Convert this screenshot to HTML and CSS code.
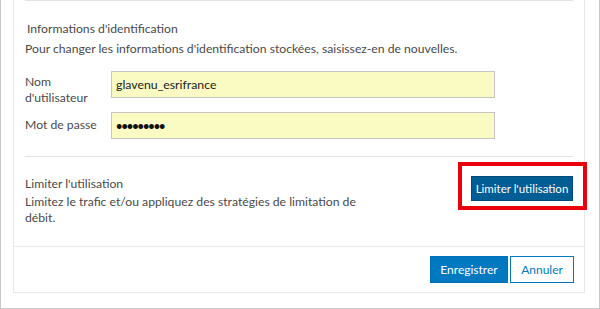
FILE: index.html
```html
<!DOCTYPE html>
<html lang="fr">
<head>
<meta charset="utf-8">
<title>Informations d'identification</title>
<link rel="stylesheet" href="styles.css">
</head>
<body>
<div class="frame">
  <div class="panel">
    <section class="sec creds">
      <h2 class="title">Informations d'identification</h2>
      <p class="desc">Pour changer les informations d'identification stockées, saisissez-en de nouvelles.</p>
      <div class="row row-user">
        <label class="lbl lbl-two" for="user">Nom<br>d'utilisateur</label>
        <input class="field" id="user" type="text" value="glavenu_esrifrance">
      </div>
      <div class="row row-pass">
        <label class="lbl lbl-one" for="pass">Mot de passe</label>
        <input class="field field-pass" id="pass" type="text" value="•••••••••">
      </div>
    </section>
    <section class="sec limit">
      <div class="limit-text">
        <h2 class="title2">Limiter l'utilisation</h2>
        <p class="desc2">Limitez le trafic et/ou appliquez des stratégies de limitation de débit.</p>
      </div>
      <div class="limit-action">
        <button class="btn btn-dark" type="button">Limiter l'utilisation</button>
        <span class="highlight"></span>
      </div>
    </section>
    <footer class="foot">
      <button class="btn btn-primary" type="button">Enregistrer</button>
      <button class="btn btn-outline" type="button">Annuler</button>
    </footer>
  </div>
</div>
</body>
</html>
```
FILE: styles.css
```css
* { box-sizing: border-box; }
html, body { margin: 0; padding: 0; background: #fff; }
body {
  font-family: "Lato", "Open Sans", sans-serif;
  font-size: 12.2px;
  color: #4a4a4a;
}
.frame {
  width: 600px;
  height: 309px;
  border: 1px solid #c9c9c9;
  border-top: none;
  overflow: hidden;
}
.panel {
  margin-left: 12px;
  width: 572px;
  height: 293px;
  border: 1px solid #e8e8e8;
  border-top: none;
  display: flex;
  flex-direction: column;
}
.sec {
  margin: 0 11px;
  border-top: 1px solid #e3e3e3;
}
.creds {
  padding: 18px 0 17px;
}
.title {
  margin: 0;
  padding-left: 2px;
  font-size: 12.2px;
  font-weight: normal;
  line-height: 20px;
}
.desc {
  margin: 0 0 12px;
  line-height: 20px;
}
.row {
  display: flex;
  align-items: flex-start;
}
.row-pass { margin-top: 6px; }
.lbl {
  width: 86px;
  flex: none;
  line-height: 16px;
}
.lbl-two { padding-top: 3px; }
.lbl-one { padding-top: 5px; }
.field {
  width: 384px;
  height: 27px;
  margin: 0;
  padding: 0 4px;
  border: 1px solid #c6c6c0;
  background: #fafbc2;
  font-family: inherit;
  font-size: 12.3px;
  color: #222;
  outline: none;
}
.field-pass {
  font-size: 11px;
  font-weight: bold;
  letter-spacing: -1px;
  color: #111;
}
.limit {
  height: 92px;
  display: flex;
  justify-content: space-between;
  align-items: flex-start;
  padding-top: 19px;
}
.limit-text { width: 350px; }
.title2 {
  margin: 0;
  font-size: 12.2px;
  font-weight: normal;
  line-height: 16px;
}
.desc2 {
  margin: 2px 0 0;
  line-height: 16px;
}
.limit-action {
  position: relative;
}
.btn {
  font-family: inherit;
  font-size: 11.5px;
  margin: 0;
  white-space: nowrap;
  cursor: pointer;
}
.btn-dark {
  width: 102px;
  height: 25px;
  border: 1px solid #004b78;
  background: #005e95;
  color: #fff;
  padding: 0;
}
.highlight {
  position: absolute;
  left: -13px;
  top: -14px;
  width: 129px;
  height: 48px;
  border: 4px solid #e8000b;
  pointer-events: none;
}
.foot {
  margin-top: auto;
  border-top: 1px solid #e8e8e8;
  padding: 9px 10px 9px 0;
  display: flex;
  justify-content: flex-end;
  gap: 2px;
}
.btn-primary {
  width: 78px;
  height: 27px;
  border: 1px solid #0070b3;
  background: #0079c1;
  color: #fff;
  padding: 0;
  font-size: 12px;
}
.btn-outline {
  width: 64px;
  height: 27px;
  border: 1px solid #0079c1;
  background: #fff;
  color: #0079c1;
  padding: 0;
  font-size: 12px;
}
```
